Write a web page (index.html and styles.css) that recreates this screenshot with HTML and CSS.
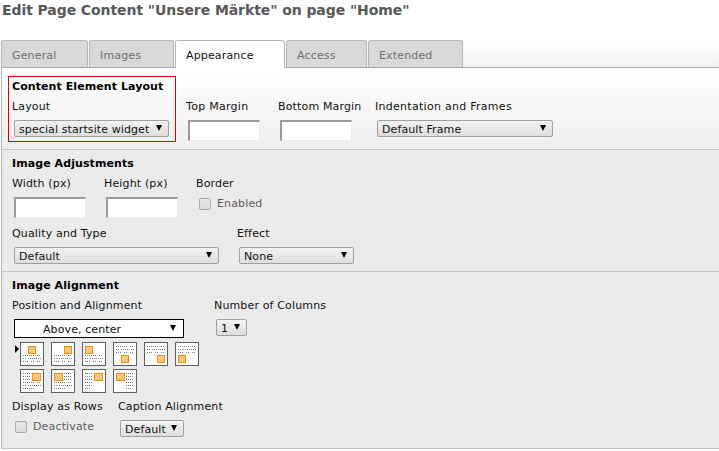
FILE: index.html
```html
<!DOCTYPE html>
<html lang="en">
<head>
<meta charset="utf-8">
<title>Edit Page Content</title>
<link rel="stylesheet" href="styles.css">
</head>
<body>
<h1 class="title">Edit Page Content "Unsere Märkte" on page "Home"</h1>
<nav class="tabs">
  <a class="tab tab-general">General</a>
  <a class="tab tab-images">Images</a>
  <a class="tab tab-appearance active">Appearance</a>
  <a class="tab tab-access">Access</a>
  <a class="tab tab-extended">Extended</a>
</nav>
<main class="panel">
  <section class="section s1">
    <div class="row">
      <div class="redbox">
        <h2 class="heading">Content Element Layout</h2>
        <label class="field">
          <span class="lbl">Layout</span>
          <span class="sel w-layout"><select><option>special startsite widget</option></select></span>
        </label>
      </div>
      <label class="field f-top">
        <span class="lbl lbl-wide">Top Margin</span>
        <input class="txt" type="text">
      </label>
      <label class="field f-bottom">
        <span class="lbl">Bottom Margin</span>
        <input class="txt" type="text">
      </label>
      <label class="field f-frame">
        <span class="lbl lbl-wide">Indentation and Frames</span>
        <span class="sel w-frame"><select><option>Default Frame</option></select></span>
      </label>
    </div>
  </section>
  <section class="section s2">
    <h2 class="heading">Image Adjustments</h2>
    <div class="row r-size">
      <label class="field f-width">
        <span class="lbl">Width (px)</span>
        <input class="txt" type="text">
      </label>
      <label class="field f-height">
        <span class="lbl">Height (px)</span>
        <input class="txt" type="text">
      </label>
      <div class="field">
        <span class="lbl">Border</span>
        <label class="check"><span class="box"></span><span>Enabled</span></label>
      </div>
    </div>
    <div class="row r-quality">
      <label class="field f-quality">
        <span class="lbl">Quality and Type</span>
        <span class="sel w-quality"><select><option>Default</option></select></span>
      </label>
      <label class="field">
        <span class="lbl">Effect</span>
        <span class="sel w-effect"><select><option>None</option></select></span>
      </label>
    </div>
  </section>
  <section class="section s3">
    <h2 class="heading">Image Alignment</h2>
    <div class="row r-pos">
      <div class="field f-pos">
        <span class="lbl">Position and Alignment</span>
        <span class="sel sel-black w-pos"><select><option>Above, center</option></select></span>
        <div class="thumbs">
          <svg class="pointer" width="4" height="8" viewBox="0 0 4 8"><path d="M0 0l4 4l-4 4z"/></svg>
          <svg class="thumb" viewBox="0 0 22 22"><rect class="pic" x="7.5" y="3.5" width="7" height="7"/><path class="ln" d="M2 12.5h12M16 12.5h4M2 15.5h3M7 15.5h13M2 18.5h6M10 18.5h4M16 18.5h4"/></svg>
          <svg class="thumb" viewBox="0 0 22 22"><rect class="pic" x="12.5" y="3.5" width="7" height="7"/><path class="ln" d="M2 12.5h12M16 12.5h4M2 15.5h3M7 15.5h13M2 18.5h6M10 18.5h4M16 18.5h4"/></svg>
          <svg class="thumb" viewBox="0 0 22 22"><rect class="pic" x="2.5" y="3.5" width="7" height="7"/><path class="ln" d="M2 12.5h12M16 12.5h4M2 15.5h3M7 15.5h13M2 18.5h6M10 18.5h4M16 18.5h4"/></svg>
          <svg class="thumb" viewBox="0 0 22 22"><path class="ln" d="M2 3.5h12M16 3.5h4M2 6.5h3M7 6.5h13M2 9.5h6M10 9.5h4M16 9.5h4"/><rect class="pic" x="7.5" y="12.5" width="7" height="7"/></svg>
          <svg class="thumb" viewBox="0 0 22 22"><path class="ln" d="M2 3.5h12M16 3.5h4M2 6.5h3M7 6.5h13M2 9.5h6M10 9.5h4M16 9.5h4"/><rect class="pic" x="12.5" y="12.5" width="7" height="7"/></svg>
          <svg class="thumb" viewBox="0 0 22 22"><path class="ln" d="M2 3.5h12M16 3.5h4M2 6.5h3M7 6.5h13M2 9.5h6M10 9.5h4M16 9.5h4"/><rect class="pic" x="2.5" y="12.5" width="7" height="7"/></svg>
          <svg class="thumb" viewBox="0 0 22 22"><path class="ln" d="M2 3.5h8M2 6.5h8M2 9.5h8M2 12.5h12M16 12.5h4M2 15.5h3M7 15.5h13M2 18.5h12"/><rect class="pic" x="11.5" y="3.5" width="8" height="7"/></svg>
          <svg class="thumb" viewBox="0 0 22 22"><path class="ln" d="M12 3.5h8M12 6.5h8M12 9.5h8M2 12.5h12M16 12.5h4M2 15.5h3M7 15.5h13M2 18.5h12"/><rect class="pic" x="2.5" y="3.5" width="8" height="7"/></svg>
          <svg class="thumb" viewBox="0 0 22 22"><path class="ln" d="M2 3.5h8M2 6.5h8M2 9.5h8M2 12.5h8M2 15.5h8M2 18.5h5"/><rect class="pic" x="11.5" y="3.5" width="8" height="7"/></svg>
          <svg class="thumb" viewBox="0 0 22 22"><path class="ln" d="M12 3.5h8M12 6.5h8M12 9.5h8M12 12.5h8M12 15.5h8M12 18.5h5"/><rect class="pic" x="2.5" y="3.5" width="8" height="7"/></svg>
        </div>
      </div>
      <label class="field">
        <span class="lbl">Number of Columns</span>
        <span class="sel w-cols"><select><option>1</option></select></span>
      </label>
    </div>
    <div class="row r-rows">
      <div class="field f-rows">
        <span class="lbl">Display as Rows</span>
        <label class="check"><span class="box"></span><span>Deactivate</span></label>
      </div>
      <label class="field">
        <span class="lbl">Caption Alignment</span>
        <span class="sel w-caption"><select><option>Default</option></select></span>
      </label>
    </div>
  </section>
</main>
</body>
</html>
```
FILE: styles.css
```css
* { box-sizing: border-box; }
html, body { margin: 0; padding: 0; }
body {
  width: 719px;
  height: 451px;
  overflow: hidden;
  background: #fff;
  font-family: "DejaVu Sans", Verdana, sans-serif;
  font-size: 11px;
  line-height: 13px;
  letter-spacing: .15px;
  color: #000;
}
.title {
  margin: 0;
  padding: 2px 0 0 2px;
  height: 40px;
  font-size: 14px;
  line-height: 17px;
  font-weight: bold;
  letter-spacing: -.08px;
  color: #585858;
}
.tabs {
  display: flex;
  gap: 1px;
  height: 28px;
  padding-left: 1px;
  background: linear-gradient(#fff, #f3f3f3);
}
.tab {
  height: 27px;
  padding: 8px 0 0 10px;
  border: 1px solid #b5b5b5;
  border-bottom: 0;
  border-radius: 3px 3px 0 0;
  background: #d9d9d9;
  color: #6e6e6e;
}
.tab-general { width: 87px; }
.tab-images { width: 85px; }
.tab-appearance { width: 110px; height: 28px; background: #fff; color: #111; position: relative; z-index: 1; }
.tab-access { width: 81px; }
.tab-extended { width: 95px; }
.panel {
  margin-left: 1px;
  border-top: 1px solid #b0b0b0;
  margin-top: -1px;
  border-left: 1px solid #b5b5b5;
}
.section { border-bottom: 1px solid #c4c4c4; padding-left: 10px; }
.s1 { height: 82px; padding-left: 6px; padding-top: 8px; background: linear-gradient(#fff, #eeeeee); }
.s2 { height: 122px; padding-top: 7px; background: #ebebeb; }
.s3 { height: 177px; padding-top: 7px; background: #ebebeb; }
.row { display: flex; align-items: flex-start; }
.heading { margin: 0 0 7px; font-size: 11px; line-height: 13px; font-weight: bold; letter-spacing: .08px; color: #000; }
.field { display: flex; flex-direction: column; align-items: flex-start; }
.lbl { display: block; color: #111; margin-bottom: 7px; white-space: nowrap; }
.lbl-wide { letter-spacing: .28px; }
.redbox {
  width: 168px;
  height: 66px;
  padding: 3px 0 0 3px;
  border: 1px solid #e00000;
}
.f-top, .f-bottom, .f-frame { margin-top: 24px; }
.f-top { margin-left: 10px; width: 92px; }
.f-bottom { width: 97px; }
.sel { display: block; position: relative; height: 17px; margin-left: 2px; }
.sel select {
  appearance: none;
  display: block;
  width: 100%;
  height: 100%;
  padding: 2px 0 0 4px;
  margin: 0;
  border: 1px solid #a0a0a0;
  border-radius: 2px;
  background: linear-gradient(#f2f2f2, #dedede);
  font: 11px/13px "DejaVu Sans", Verdana, sans-serif;
  letter-spacing: .1px;
  color: #111;
}
.sel::after {
  content: "";
  position: absolute;
  right: 7px;
  top: 5px;
  border-style: solid;
  border-width: 6px 3px 0;
  border-color: #000 transparent transparent;
}
.sel-black select { background: #fff; border-color: #000; border-radius: 0; padding-left: 28px; }
.sel-black::after { right: 8px; top: 6px; }
.w-layout { width: 155px; }
.w-frame { width: 176px; }
.w-quality { width: 205px; }
.w-effect { width: 115px; }
.w-pos { width: 170px; height: 19px; }
.w-cols { width: 31px; }
.w-caption { width: 64px; }
.txt {
  display: block;
  width: 72px;
  height: 21px;
  margin: 0 0 0 2px;
  padding: 0;
  background: #fff;
  border-style: solid;
  border-width: 2px 1px 1px 2px;
  border-color: #9a9a9a #eee #eee #9a9a9a;
}
.f-width { width: 92px; }
.f-height { width: 92px; }
.r-quality { margin-top: 9px; }
.f-quality { width: 225px; }
.check { display: flex; align-items: center; gap: 6px; color: #5c5c5c; margin-left: 3px; }
.box {
  width: 12px;
  height: 12px;
  border: 1px solid #aaa;
  border-radius: 2px;
  background: linear-gradient(#e8e8e8, #dcdcdc);
}
.f-pos { width: 202px; }
.thumbs {
  position: relative;
  display: flex;
  flex-wrap: wrap;
  gap: 3px 7px;
  margin: 4px 0 0 8px;
  width: 186px;
}
.pointer { position: absolute; left: -5px; top: 3px; }
.thumb {
  width: 24px;
  height: 24px;
  background: #fff;
  border: 1px solid #5f5f5f;
}
.thumb .ln { stroke: #777; stroke-width: 1; stroke-dasharray: 1 1; fill: none; shape-rendering: crispEdges; }
.thumb .pic { fill: #fcc88a; stroke: #ff8c00; stroke-width: 1; shape-rendering: crispEdges; }
.r-rows { margin-top: 7px; }
.f-rows { width: 106px; }
```
